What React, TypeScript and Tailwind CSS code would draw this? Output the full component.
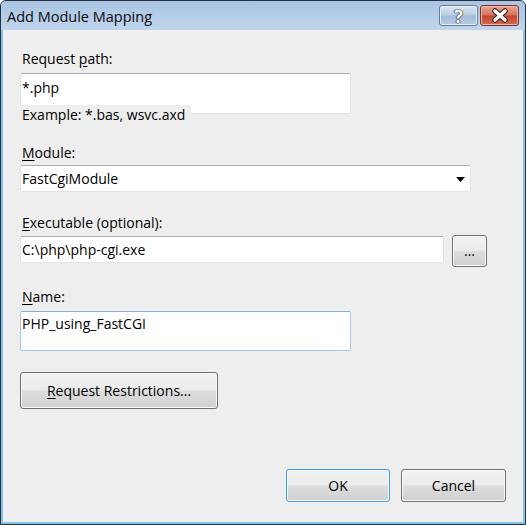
import type { ReactNode } from "react";

const btnFace =
  "bg-[linear-gradient(to_bottom,#f2f2f2_0%,#ebebeb_48%,#dddddd_52%,#d0d0d0_100%)] shadow-[inset_0_0_0_1px_#fbfbfb]";

function Label({ children }: { children: ReactNode }) {
  return <div className="pl-[2px] text-[14px] leading-[19px] text-black">{children}</div>;
}

function Button({
  children,
  className,
  isDefault,
}: {
  children: ReactNode;
  className: string;
  isDefault?: boolean;
}) {
  return (
    <button
      className={`${btnFace} ${className} flex items-center justify-center rounded-[3px] border text-[14px] leading-[19px] text-black ${
        isDefault
          ? "border-[#3c9fe0] shadow-[inset_0_0_0_1px_#c9e8fb]"
          : "border-[#707070]"
      }`}
    >
      {children}
    </button>
  );
}

export default function App() {
  return (
    <div className="flex h-[525px] w-[526px] flex-col overflow-hidden rounded-t-[6px] border border-[#27313d] bg-[#86c3ec] font-['Open_Sans',sans-serif]">
      {/* Title bar */}
      <div className="flex h-[29px] items-start justify-between bg-gradient-to-b from-[#a9c5e3] to-[#c0d5ec] pl-[6px] pr-[6px]">
        <span className="pt-[6px] text-[14.5px] leading-[20px] text-[#0a0a0a]">Add Module Mapping</span>
        <div className="flex gap-[2px] pt-[4px]">
          <div className="flex h-[21px] w-[39px] items-center justify-center rounded-[3px] border border-[#6a7c94] bg-[linear-gradient(to_bottom,#dbe6f3_0%,#b9cce3_48%,#a3bbd8_52%,#b6cbe4_100%)] shadow-[inset_0_0_0_1px_#e8f0f9]">
            <span className="text-[18px] font-bold leading-[18px] text-white [text-shadow:0_0_1px_#333,0_0_1px_#333,0_0_1px_#333,0_0_1px_#333]">
              ?
            </span>
          </div>
          <div className="flex h-[21px] w-[39px] items-center justify-center rounded-[3px] border border-[#7a2f28] bg-[linear-gradient(to_bottom,#e9a594_0%,#d4715d_48%,#c2442e_52%,#d46a52_100%)] shadow-[inset_0_0_0_1px_#efb7aa]">
            <svg width="18" height="15" viewBox="0 0 18 15">
              <path d="M4 3 L14 12 M14 3 L4 12" stroke="#3b1a14" strokeWidth="5.5" strokeLinecap="round" />
              <path d="M4 3 L14 12 M14 3 L4 12" stroke="#ffffff" strokeWidth="3.5" strokeLinecap="round" />
            </svg>
          </div>
        </div>
      </div>

      {/* Dialog body */}
      <div className="mx-[2px] mb-[2px] flex flex-1 flex-col bg-[#eeeeee] pl-[17px] pt-[19px]">
        <Label>
          Request <u className="underline-offset-2">p</u>ath:
        </Label>
        <div className="mt-[5px] h-[41px] w-[331px] rounded-[2px] border border-[#e2e3ea] border-t-[#abadb3] bg-white pl-[1px] pt-[4px] text-[14px] leading-[19px] text-black">
          *.php
        </div>
        <div className="relative -mt-[9px] w-fit bg-[#eeeeee] pl-[2px] pr-[6px] text-[14px] leading-[19px] text-black">
          Example: *.bas, wsvc.axd
        </div>

        <div className="mt-[19px]">
          <Label>
            <u className="underline-offset-2">M</u>odule:
          </Label>
        </div>
        <div className="mt-[3px] flex h-[27px] w-[451px] items-start justify-between rounded-[2px] border border-[#e2e3ea] border-t-[#abadb3] bg-white pl-[1px] pr-[5px] pt-[3px] text-[14px] leading-[19px] text-black">
          <span>FastCgiModule</span>
          <svg className="mt-[8px]" width="9" height="5" viewBox="0 0 9 5">
            <path d="M0 0 H9 L4.5 5 Z" fill="#000" />
          </svg>
        </div>

        <div className="mt-[21px]">
          <Label>
            <u className="underline-offset-2">E</u>xecutable (optional):
          </Label>
        </div>
        <div className="mt-[3px] flex items-start">
          <div className="mt-[1px] h-[27px] w-[424px] rounded-[2px] border border-[#e2e3ea] border-t-[#abadb3] bg-white pl-[1px] pt-[3px] text-[14px] leading-[19px] text-black">
            C:\php\php-cgi.exe
          </div>
          <Button className="ml-[8px] h-[32px] w-[35px] pb-[2px]">...</Button>
        </div>

        <div className="mt-[20px]">
          <Label>
            <u className="underline-offset-2">N</u>ame:
          </Label>
        </div>
        <div className="mt-[5px] h-[40px] w-[331px] rounded-[2px] border border-[#a3c8e8] border-t-[#7fb0dc] bg-white pl-[1px] pt-[2px] text-[14px] leading-[19px] text-black">
          PHP_using_FastCGI
        </div>

        <Button className="mt-[21px] h-[37px] w-[198px]">
          <span>
            <u className="underline-offset-2">R</u>equest Restrictions...
          </span>
        </Button>

        <div className="mt-auto flex justify-end gap-[11px] pb-[20px] pr-[17px]">
          <Button isDefault className="h-[33px] w-[104px]">
            OK
          </Button>
          <Button className="h-[33px] w-[105px]">Cancel</Button>
        </div>
      </div>
    </div>
  );
}
